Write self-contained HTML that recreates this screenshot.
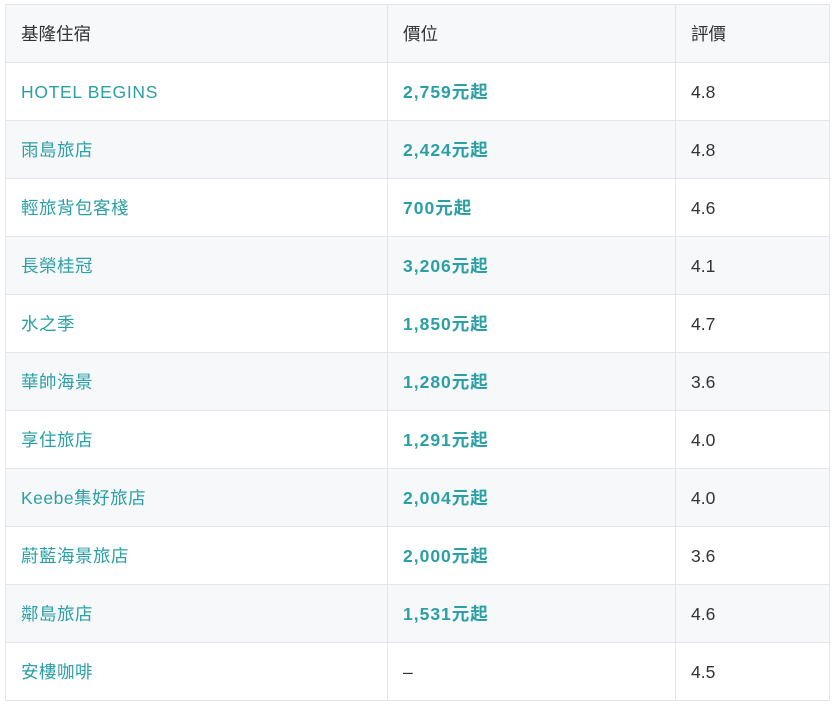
<!DOCTYPE html>
<html><head><meta charset="utf-8"><style>
body{margin:0;background:#fff;font-family:"Liberation Sans","Noto Sans CJK TC",sans-serif;}
table{position:absolute;left:5px;top:4px;border-collapse:collapse;width:824px;font-size:17.5px;table-layout:fixed;}
td,th{border:1px solid #e3e5e8;height:58px;padding:0 0 0 15px;text-align:left;font-weight:normal;color:#333;box-sizing:border-box;vertical-align:middle;line-height:24px;}
td div,th div{height:24px;line-height:24px;white-space:nowrap;}
th{background:#f7f8fa;}
tr:nth-child(odd) td{background:#f7f8fa;}
td.n{color:#2a9fa6;letter-spacing:0.5px;}
td.p{color:#2a9fa6;font-weight:bold;letter-spacing:1px;}
</style></head><body>
<table>
<colgroup><col style="width:382px"><col style="width:288px"><col style="width:154px"></colgroup>
<tr><th><div>基隆住宿</div></th><th><div>價位</div></th><th><div>評價</div></th></tr>
<tr><td class="n" style="letter-spacing:0.7px"><div>HOTEL BEGINS</div></td><td class="p"><div>2,759元起</div></td><td><div>4.8</div></td></tr>
<tr><td class="n"><div>雨島旅店</div></td><td class="p"><div>2,424元起</div></td><td><div>4.8</div></td></tr>
<tr><td class="n"><div>輕旅背包客棧</div></td><td class="p"><div>700元起</div></td><td><div>4.6</div></td></tr>
<tr><td class="n"><div>長榮桂冠</div></td><td class="p"><div>3,206元起</div></td><td><div>4.1</div></td></tr>
<tr><td class="n"><div>水之季</div></td><td class="p"><div>1,850元起</div></td><td><div>4.7</div></td></tr>
<tr><td class="n"><div>華帥海景</div></td><td class="p"><div>1,280元起</div></td><td><div>3.6</div></td></tr>
<tr><td class="n"><div>享住旅店</div></td><td class="p"><div>1,291元起</div></td><td><div>4.0</div></td></tr>
<tr><td class="n"><div>Keebe集好旅店</div></td><td class="p"><div>2,004元起</div></td><td><div>4.0</div></td></tr>
<tr><td class="n"><div>蔚藍海景旅店</div></td><td class="p"><div>2,000元起</div></td><td><div>3.6</div></td></tr>
<tr><td class="n"><div>鄰島旅店</div></td><td class="p"><div>1,531元起</div></td><td><div>4.6</div></td></tr>
<tr><td class="n"><div>安樓咖啡</div></td><td><div>–</div></td><td><div>4.5</div></td></tr>
</table>
</body></html>
